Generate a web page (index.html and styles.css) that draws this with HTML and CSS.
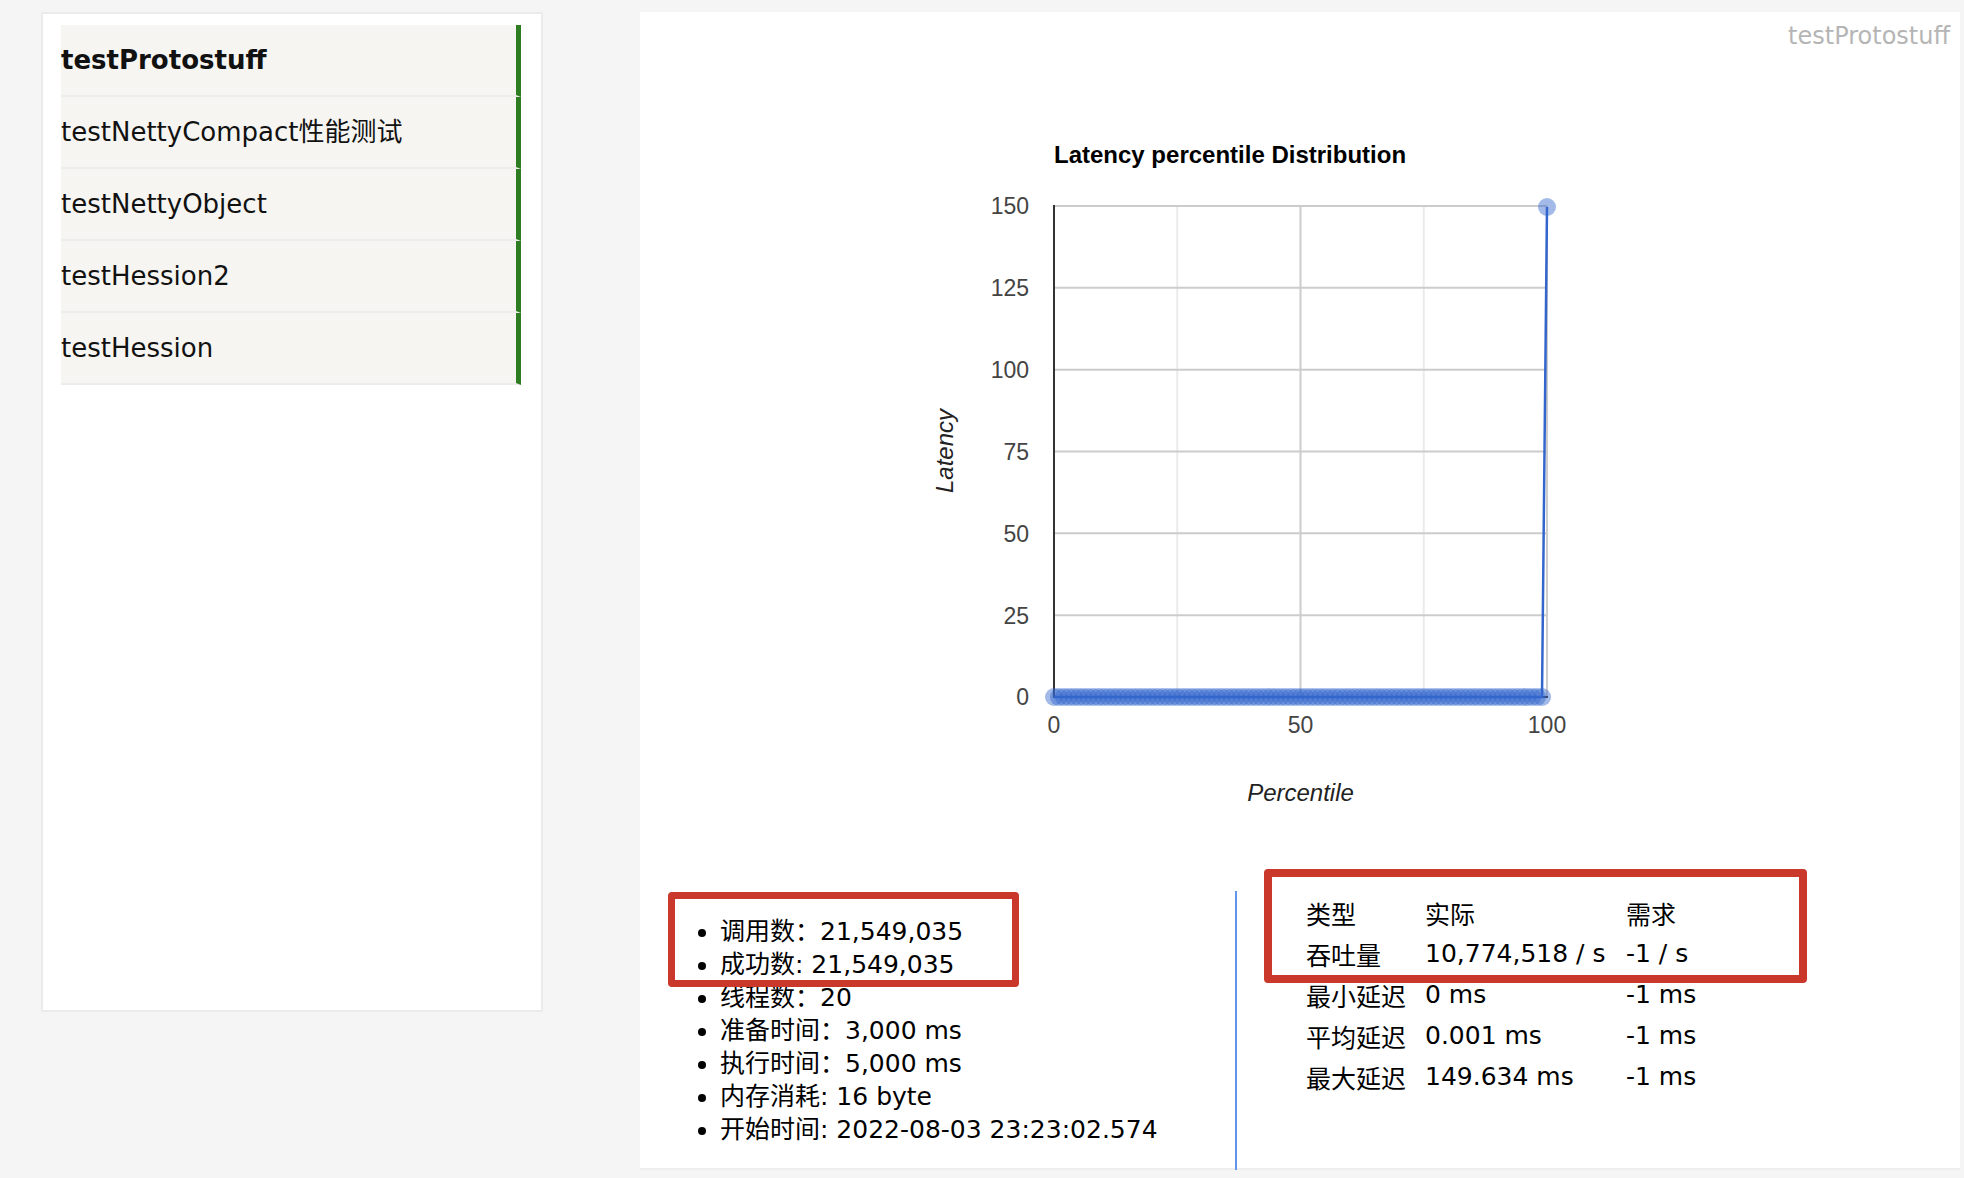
FILE: index.html
```html
<!DOCTYPE html>
<html lang="zh-CN">
<head>
    <meta charset="UTF-8">
    <meta name="viewport" content="width=device-width, initial-scale=1.0">
    <title>testProtostuff</title>
    <link rel="stylesheet" href="styles.css">
</head>
<body>
    <div class="page">
        <aside class="sidebar">
            <ul class="menu">
                <li class="menu-item active">testProtostuff</li>
                <li class="menu-item">testNettyCompact性能测试</li>
                <li class="menu-item">testNettyObject</li>
                <li class="menu-item">testHession2</li>
                <li class="menu-item">testHession</li>
            </ul>
        </aside>

        <main class="report">
            <div class="report-title">testProtostuff</div>

            <svg id="latencyChart" class="chart" width="1320" height="831" viewBox="0 0 1320 831">
                <text class="chart-title" x="414" y="103">Latency percentile Distribution</text>

                <!-- grid -->
                <g class="grid-minor">
                    <line x1="537.25" y1="146" x2="537.25" y2="637"></line>
                    <line x1="783.75" y1="146" x2="783.75" y2="637"></line>
                </g>
                <g class="grid-major">
                    <line x1="414" y1="146" x2="907" y2="146"></line>
                    <line x1="414" y1="227.8" x2="907" y2="227.8"></line>
                    <line x1="414" y1="309.7" x2="907" y2="309.7"></line>
                    <line x1="414" y1="391.5" x2="907" y2="391.5"></line>
                    <line x1="414" y1="473.3" x2="907" y2="473.3"></line>
                    <line x1="414" y1="555.2" x2="907" y2="555.2"></line>
                    <line x1="660.5" y1="146" x2="660.5" y2="637"></line>
                    <line x1="907" y1="146" x2="907" y2="637"></line>
                </g>
                <g class="axis">
                    <line x1="414" y1="145" x2="414" y2="638"></line>
                    <line x1="413" y1="637" x2="908" y2="637"></line>
                </g>

                <!-- tick labels -->
                <g class="tick tick-y">
                    <text x="389" y="154.3">150</text>
                    <text x="389" y="236.1">125</text>
                    <text x="389" y="318">100</text>
                    <text x="389" y="399.8">75</text>
                    <text x="389" y="481.6">50</text>
                    <text x="389" y="563.5">25</text>
                    <text x="389" y="645.3">0</text>
                </g>
                <g class="tick tick-x">
                    <text x="414" y="673">0</text>
                    <text x="660.5" y="673">50</text>
                    <text x="907" y="673">100</text>
                </g>

                <text class="axis-title" x="660.5" y="741">Percentile</text>
                <text class="axis-title" transform="translate(313 391) rotate(-90)">Latency</text>

                <g id="points" class="points"></g>
                <polyline class="series" points="414,637 902,637 907,147"></polyline>
            </svg>

            <div class="stats">
                <ul class="summary">
                    <li>调用数：21,549,035</li>
                    <li>成功数: 21,549,035</li>
                    <li>线程数：20</li>
                    <li>准备时间：3,000 ms</li>
                    <li>执行时间：5,000 ms</li>
                    <li>内存消耗: 16 byte</li>
                    <li>开始时间: 2022-08-03 23:23:02.574</li>
                </ul>
                <div class="metrics">
                    <table>
                        <tr><td>类型</td><td>实际</td><td>需求</td></tr>
                        <tr><td>吞吐量</td><td>10,774,518 / s</td><td>-1 / s</td></tr>
                        <tr><td>最小延迟</td><td>0 ms</td><td>-1 ms</td></tr>
                        <tr><td>平均延迟</td><td>0.001 ms</td><td>-1 ms</td></tr>
                        <tr><td>最大延迟</td><td>149.634 ms</td><td>-1 ms</td></tr>
                    </table>
                </div>
                <div class="mark mark-summary"></div>
                <div class="mark mark-metrics"></div>
            </div>
        </main>
    </div>

    <script>
        // plot area in svg units
        const PLOT_LEFT = 414;
        const PLOT_WIDTH = 493;
        const PLOT_BOTTOM = 637;
        const SVG_NS = 'http://www.w3.org/2000/svg';

        const pointsGroup = document.getElementById('points');

        function addPoint(x, y) {
            const c = document.createElementNS(SVG_NS, 'circle');
            c.setAttribute('cx', x);
            c.setAttribute('cy', y);
            c.setAttribute('r', 9);
            pointsGroup.appendChild(c);
        }

        // p0 .. p99 all sit at 0 ms, p100 is the max latency
        for (let i = 0; i < 100; i++) {
            addPoint(PLOT_LEFT + PLOT_WIDTH * i / 100, PLOT_BOTTOM);
        }
        addPoint(PLOT_LEFT + PLOT_WIDTH, 147);
    </script>
</body>
</html>
```

FILE: styles.css
```css
body {
    margin: 0;
    background-color: #f5f5f5;
    font-family: "DejaVu Sans", "Noto Sans CJK SC", sans-serif;
    color: #111;
}
.page {
    display: flex;
    align-items: flex-start;
    gap: 97px;
    padding: 12px 0 0 41px;
}

/* --- sidebar --- */
.sidebar {
    box-sizing: border-box;
    width: 502px;
    height: 1000px;
    background-color: #fff;
    border: 2px solid #ebebeb;
    padding: 11px 20px 0 18px;
}
.menu {
    list-style: none;
    margin: 0;
    padding: 0;
}
.menu-item {
    height: 70px;
    line-height: 70px;
    font-size: 26px;
    background-color: #f6f5f1;
    border-right: 5px solid #2f7d22;
    border-bottom: 2px solid #ececec;
    white-space: nowrap;
}
.menu-item.active {
    font-weight: bold;
}

/* --- report --- */
.report {
    width: 1320px;
    height: 1156px;
    background-color: #fff;
    border-bottom: 2px solid #eeeeee;
}
.report-title {
    height: 48px;
    line-height: 48px;
    padding-right: 10px;
    text-align: right;
    font-size: 24px;
    color: #b5b5b5;
}
.chart {
    display: block;
    font-family: "Liberation Sans", Arial, sans-serif;
}
.chart-title {
    font-size: 24px;
    font-weight: bold;
    fill: #000;
}
.grid-major line {
    stroke: #cccccc;
    stroke-width: 2;
}
.grid-minor line {
    stroke: #ebebeb;
    stroke-width: 2;
}
.axis line {
    stroke: #333;
    stroke-width: 2;
}
.tick text {
    font-size: 23px;
    fill: #444;
}
.tick-y text {
    text-anchor: end;
}
.tick-x text {
    text-anchor: middle;
}
.axis-title {
    font-size: 24px;
    font-style: italic;
    fill: #222;
    text-anchor: middle;
}
.points circle {
    fill: #3366cc;
    fill-opacity: 0.45;
}
.series {
    fill: none;
    stroke: #3366cc;
    stroke-width: 2.5;
}

/* --- stats under the chart --- */
.stats {
    position: relative;
    display: grid;
    grid-template-columns: 595px 1fr;
    height: 279px;
    font-size: 25px;
    color: #000;
}
.summary {
    margin: 24px 0;
    padding-left: 80px;
    line-height: 33px;
}
.metrics {
    border-left: 2px solid #6495ed;
    padding: 1px 0 0 69px;
}
.metrics table {
    border-collapse: collapse;
}
.metrics td {
    height: 41px;
    padding: 0;
    white-space: nowrap;
}
.metrics td:nth-child(1) {
    width: 119px;
}
.metrics td:nth-child(2) {
    width: 201px;
}

/* red review marks drawn over the numbers */
.mark {
    position: absolute;
    border: 7px solid #c9382a;
    border-radius: 4px;
    box-sizing: border-box;
}
.mark-summary {
    left: 28px;
    top: 1px;
    width: 351px;
    height: 95px;
}
.mark-metrics {
    left: 624px;
    top: -22px;
    width: 543px;
    height: 114px;
    border-width: 8px;
}
```
